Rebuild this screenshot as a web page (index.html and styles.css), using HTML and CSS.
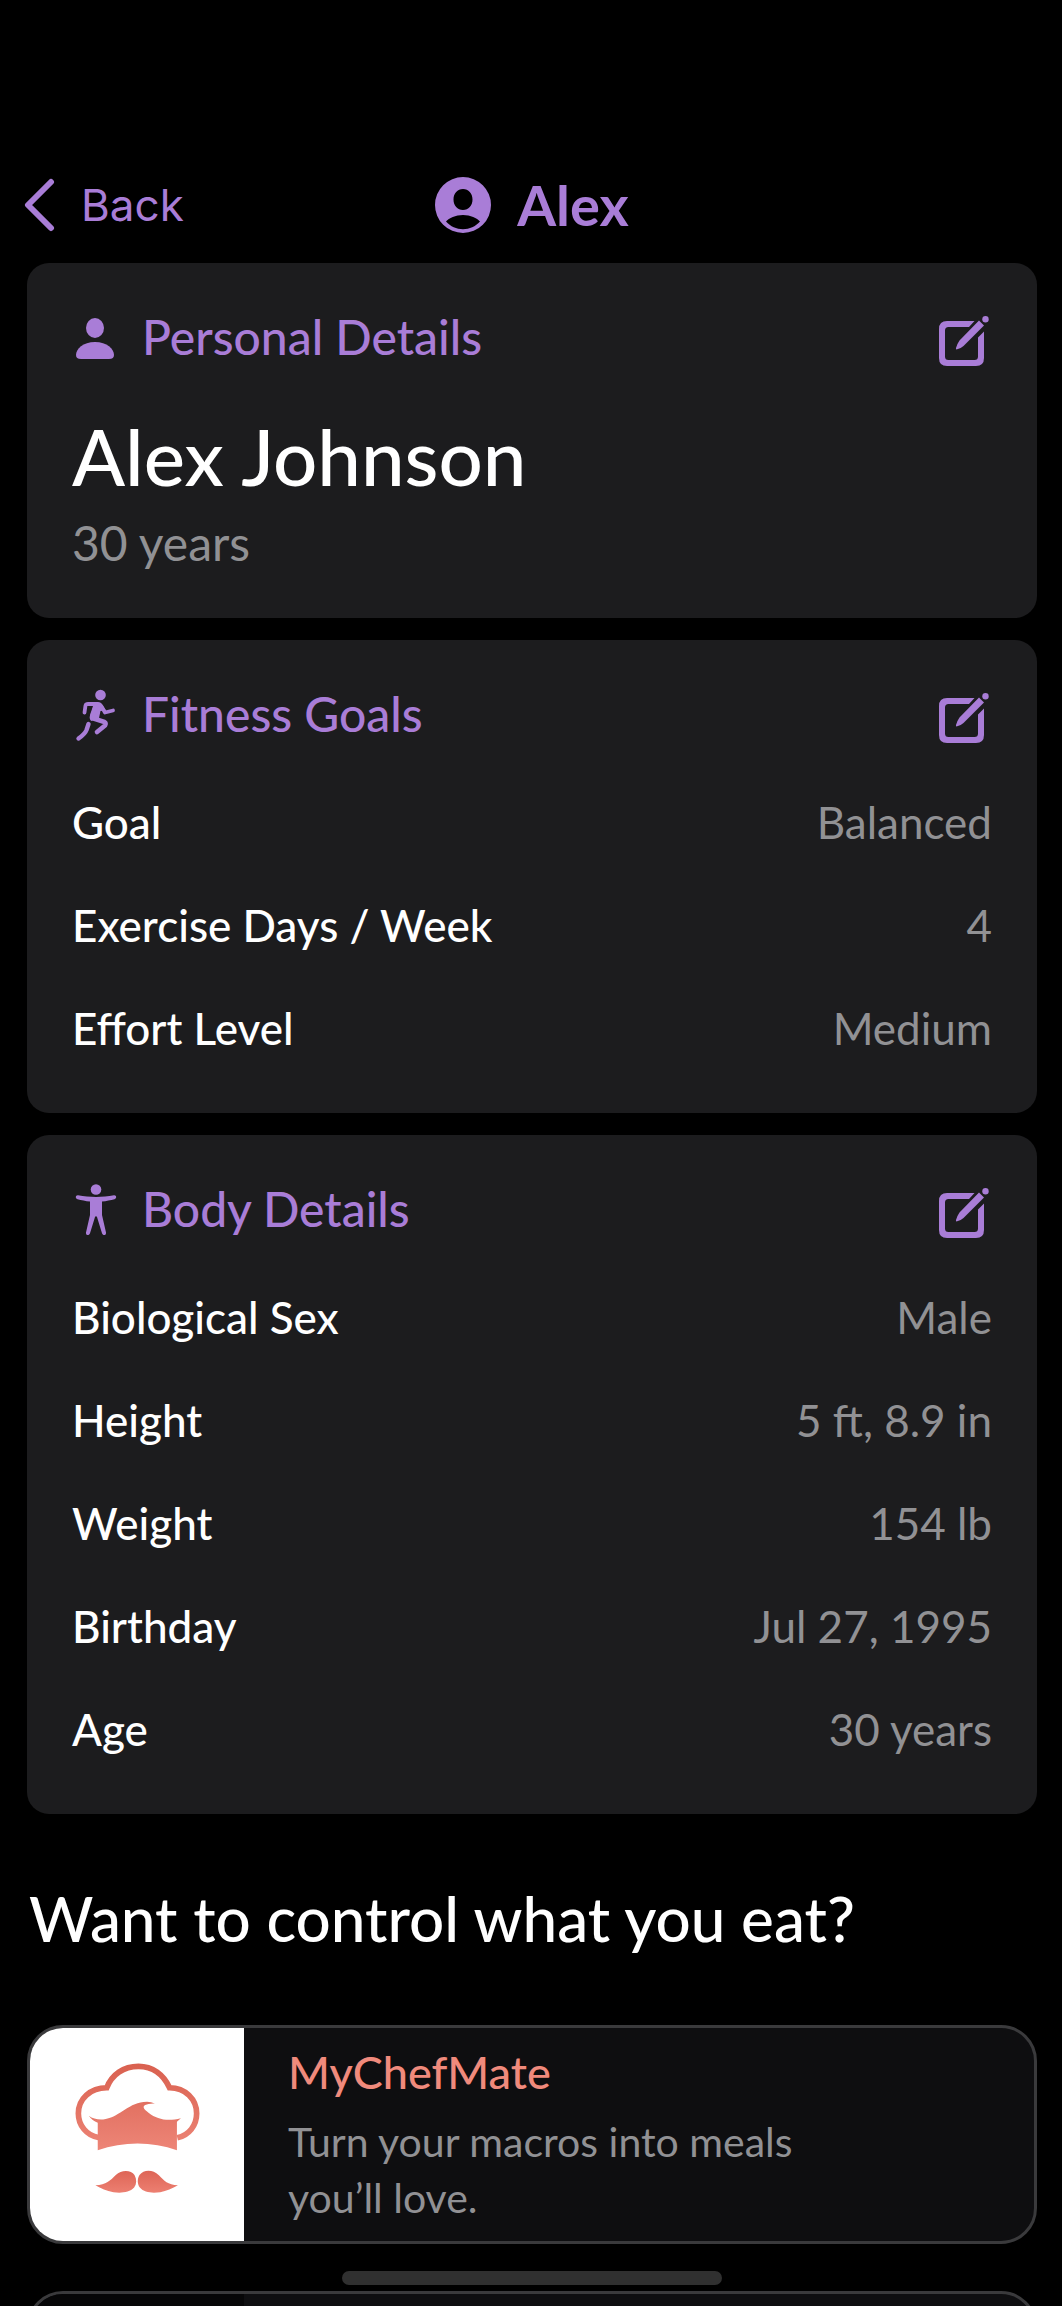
FILE: index.html
```html
<!DOCTYPE html>
<html lang="en">
<head>
  <meta charset="UTF-8" />
  <meta name="viewport" content="width=device-width, initial-scale=1.0"/>
  <title>Alex | Profile</title>
  <link rel="stylesheet" href="styles.css">
</head>
<body>
  <!-- shared edit icon -->
  <svg width="0" height="0" class="sprite" aria-hidden="true">
    <symbol id="edit" viewBox="0 0 51 57">
      <path d="M35.500 12L30 18H9.500Q6 18 6 21.500V47.500Q6 51 9.500 51H35.500Q39 51 39 47.500V28.500L45 22.500V49Q45 57 37 57H8Q0 57 0 49V20Q0 12 8 12Z"/>
      <path d="M40 11.500L45 16.500L24.500 37Q21 40.200 17.500 40.500Q16.700 40 17 39Q18 35 20.500 31.500Z"/>
      <circle cx="46.500" cy="10.200" r="3.200"/>
    </symbol>
  </svg>

  <div class="app">
    <header class="topbar">
      <button type="button" class="back">
        <svg width="32" height="54" viewBox="0 0 32 54"><path d="M28 4L5 27L28 50" fill="none" stroke="currentColor" stroke-width="6" stroke-linecap="round" stroke-linejoin="round"/></svg>
        Back
      </button>
      <h1>
        <svg width="56" height="56" viewBox="0 0 56 56" fill="currentColor"><path fill-rule="evenodd" d="M28 0A28 28 0 1 1 28 56A28 28 0 1 1 28 0ZM28 12C22.500 12 18.500 16.500 18.500 22.500C18.500 28.500 22.500 33 28 33C33.500 33 37.500 28.500 37.500 22.500C37.500 16.500 33.500 12 28 12ZM28 38C20.500 38 14 41 11 44.500C15.500 49.500 21.500 52.200 28 52.200C34.500 52.200 40.500 49.500 45 44.500C42 41 35.500 38 28 38Z"/></svg>
        Alex
      </h1>
    </header>

    <main>
      <section class="card">
        <div class="card-head">
          <svg class="icon" viewBox="0 0 46 56" fill="currentColor"><ellipse cx="23" cy="19" rx="9" ry="10"/><path d="M9 50C5.500 50 4 48.500 4 46C4 40 11 33 23 33C35 33 42 40 42 46C42 48.500 40.500 50 37 50Z"/></svg>
          <h2>Personal Details</h2>
          <button type="button" class="edit" aria-label="Edit personal details"><svg><use href="#edit"/></svg></button>
        </div>
        <p class="name">Alex Johnson</p>
        <p class="years">30 years</p>
      </section>

      <section class="card">
        <div class="card-head">
          <svg class="icon" viewBox="0 0 46 56" fill="none" stroke="currentColor" stroke-linecap="round" stroke-linejoin="round"><circle cx="28.500" cy="9" r="5.300" fill="currentColor" stroke="none"/><path d="M20 16.500H26Q29 16.500 31 20L34 24.500L28.500 25L27 32L19 35Q16.500 31 19 26L21 20Z" fill="currentColor" stroke="none"/><path d="M12.500 26.500L13.500 19.500Q14 18 16 18H25.500Q28 18 29.500 20.500L33 26.500L41 24.500" stroke-width="3.800"/><path d="M24 20L20 32L32.500 36Q34.500 37 33 39.500L25 46" stroke-width="4.600"/><path d="M16.500 38L14.500 44Q13 48 6.500 52.500" stroke-width="4.400"/></svg>
          <h2>Fitness Goals</h2>
          <button type="button" class="edit" aria-label="Edit fitness goals"><svg><use href="#edit"/></svg></button>
        </div>
        <dl>
          <div class="row"><dt>Goal</dt><dd>Balanced</dd></div>
          <div class="row"><dt>Exercise Days / Week</dt><dd>4</dd></div>
          <div class="row"><dt>Effort Level</dt><dd>Medium</dd></div>
        </dl>
      </section>

      <section class="card">
        <div class="card-head">
          <svg class="icon" viewBox="0 0 46 56" fill="currentColor"><circle cx="24" cy="8.500" r="5.300"/><path d="M6 14.300C12 15.500 18 16 24 16C30 16 36 15.500 42 14.300C44.500 14 45 17.500 42.500 18.200C38.500 19.300 34.500 20 30 20.500V34L34 51.500C34.500 54.500 30.800 55 30 52.300L25 36C24.700 35 23.300 35 23 36L18 52.300C17.200 55 13.500 54.500 14 51.500L18 34V20.500C13.500 20 9.500 19.300 5.500 18.200C3 17.500 3.500 14 6 14.300Z"/></svg>
          <h2>Body Details</h2>
          <button type="button" class="edit" aria-label="Edit body details"><svg><use href="#edit"/></svg></button>
        </div>
        <dl>
          <div class="row"><dt>Biological Sex</dt><dd>Male</dd></div>
          <div class="row"><dt>Height</dt><dd>5 ft, 8.9 in</dd></div>
          <div class="row"><dt>Weight</dt><dd>154 lb</dd></div>
          <div class="row"><dt>Birthday</dt><dd>Jul 27, 1995</dd></div>
          <div class="row"><dt>Age</dt><dd>30 years</dd></div>
        </dl>
      </section>

      <h2 class="promo-title">Want to control what you eat?</h2>

      <a href="#" class="promo">
        <span class="promo-logo">
          <svg width="125" height="143" viewBox="220 160 374 428">
            <defs>
              <linearGradient id="hat" x1="0" y1="160" x2="0" y2="420" gradientUnits="userSpaceOnUse"><stop offset="0" stop-color="#d9604f"/><stop offset="1" stop-color="#ed8577"/></linearGradient>
              <linearGradient id="stache" x1="0" y1="480" x2="0" y2="550" gradientUnits="userSpaceOnUse"><stop offset="0" stop-color="#dd6455"/><stop offset="1" stop-color="#ed8072"/></linearGradient>
            </defs>
            <path d="M290 383C255 377 230 347 230 311C230 267 266 234 315 234C330 195 365 170 410 170C452 170 485 195 503 234C550 234 584 268 584 311C584 347 561 376 526 384" fill="none" stroke="url(#hat)" stroke-width="17"/>
            <path d="M261 318C273 327 287 330 304 329C350 325 375 283 425 277Q443 274 459 281Q440 280 430 286C420 292 428 300 440 309C468 331 500 335 537 325L525 336V421C450 394 365 394 288 421V339C277 335 268 328 261 318Z" fill="url(#hat)"/>
            <path d="M281 526C314 524 325 512 342 495C359 479 388 480 398 495C405 508 405 521 397 533C383 549 355 550 335 547C314 543 298 535 281 526ZM528 526C497 524 487 513 471 496C452 477 425 479 413 495C406 507 406 521 414 533C427 549 452 550 475 547C494 543 511 535 528 526Z" fill="url(#stache)"/>
          </svg>
        </span>
        <span class="promo-text">
          <strong>MyChefMate</strong>
          <span>Turn your macros into meals you’ll love.</span>
        </span>
      </a>
      <a href="#" class="promo" aria-label="More apps">
        <span class="promo-logo dark"></span>
      </a>
    </main>

    <div class="home-bar"></div>
  </div>
</body>
</html>
```
FILE: styles.css
```css
* {
  box-sizing: border-box;
  margin: 0;
  padding: 0;
}

body {
  background: #000;
  color: #fff;
  font-family: Lato, "Open Sans", sans-serif;
}

button {
  background: none;
  border: none;
  color: inherit;
  cursor: pointer;
}

svg {
  display: block;
  flex-shrink: 0;
}

.sprite {
  position: absolute;
}

.app {
  height: 100vh;
  overflow: hidden;
  padding: 146px 25px 0 27px;
}

.topbar {
  display: grid;
  grid-template-columns: 1fr auto 1fr;
  align-items: center;
  height: 117px;
  color: #a97dd7;
}

.back {
  display: flex;
  align-items: center;
  gap: 26px;
  justify-self: start;
  margin-left: -4px;
  font-family: Inter, sans-serif;
  font-size: 44px;
}

.topbar h1 {
  display: flex;
  align-items: center;
  gap: 26px;
  font-size: 56px;
  line-height: 60px;
  font-weight: 700;
}

.card {
  background: #1c1c1e;
  border-radius: 22px;
  padding: 46px 45px 34px;
  margin-bottom: 22px;
}

.card-head {
  display: flex;
  align-items: center;
  gap: 24px;
  height: 56px;
  color: #a97dd7;
}

.card-head h2 {
  flex: 1;
  font-size: 48px;
  line-height: 56px;
  font-weight: 500;
}

.icon {
  width: 46px;
  height: 56px;
}

.edit {
  margin-right: 2px;
}

.edit svg {
  width: 51px;
  height: 57px;
  fill: currentColor;
}

.name {
  margin-top: 44px;
  font-size: 78px;
  line-height: 94px;
  font-weight: 500;
}

.years {
  margin: 12px 0 13px;
  font-size: 48px;
  line-height: 56px;
  color: #919194;
}

dl {
  margin-top: 28px;
}

.row {
  display: flex;
  justify-content: space-between;
  align-items: center;
  height: 103px;
  font-size: 44px;
}

.row dt {
  font-weight: 500;
}

.row dd {
  color: #919194;
}

.promo-title {
  margin: 68px 2px 71px;
  font-size: 62px;
  line-height: 72px;
  font-weight: 500;
}

.promo {
  display: flex;
  min-height: 219px;
  margin-bottom: 47px;
  background: #0e0e10;
  border: 3px solid #3a3a3c;
  border-radius: 36px;
  overflow: hidden;
  color: #919194;
  text-decoration: none;
}

.promo-logo {
  display: flex;
  align-items: center;
  justify-content: center;
  width: 214px;
  background: #fff;
}

.promo-logo.dark {
  background: #060607;
}

.promo-text {
  display: flex;
  flex-direction: column;
  justify-content: center;
  gap: 14px;
  max-width: 620px;
  padding-left: 44px;
  font-size: 41px;
  line-height: 56px;
}

.promo-text strong {
  color: #f08a7c;
  font-size: 45px;
  font-weight: 500;
}

.home-bar {
  position: fixed;
  left: 50%;
  bottom: 21px;
  width: 380px;
  height: 14px;
  margin-left: -189px;
  border-radius: 7px;
  background: #303030;
}
```
